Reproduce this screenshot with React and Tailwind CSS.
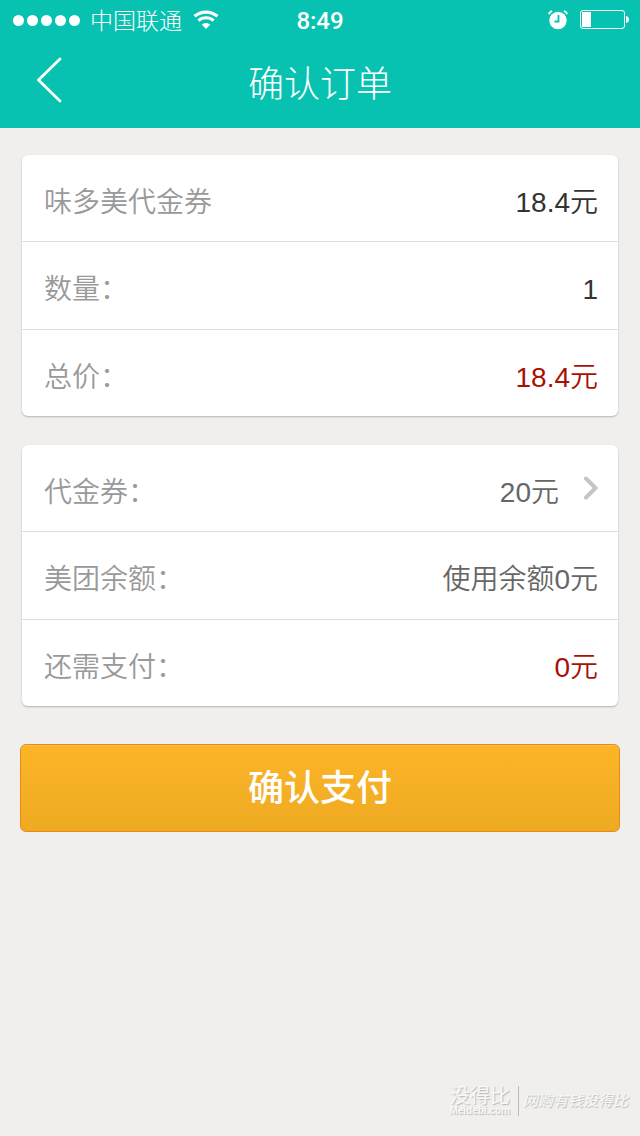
import { clsx } from 'clsx';

const orderRows = [
  { label: '味多美代金券', value: '18.4元', tone: 'dark' },
  { label: '数量：', value: '1', tone: 'dark' },
  { label: '总价：', value: '18.4元', tone: 'red' },
];

const paymentRows = [
  { label: '代金券：', value: '20元', tone: 'gray', link: true },
  { label: '美团余额：', value: '使用余额0元', tone: 'gray' },
  { label: '还需支付：', value: '0元', tone: 'red' },
];

const toneClass = {
  dark: 'text-[#333333]',
  gray: 'text-[#666666]',
  red: 'text-[#a81006]',
};

function WifiIcon() {
  return (
    <svg width="26" height="20" viewBox="0 0 26 20" fill="none" stroke="#fff" aria-label="Wi-Fi">
      <path d="M1.500 6.300C8 .6 18 .6 24.500 6.300" strokeWidth="3.200" />
      <path d="M5.400 10.700C9.800 6.900 16.200 6.900 20.600 10.700" strokeWidth="3" />
      <path d="M13 19 8.800 14.600C11.200 12.500 14.800 12.500 17.200 14.600Z" fill="#fff" stroke="none" />
    </svg>
  );
}

function AlarmIcon() {
  return (
    <svg width="20" height="20" viewBox="0 0 20 20" fill="none" aria-label="闹钟">
      <circle cx="10" cy="10.500" r="8.700" fill="#fff" />
      <path d="M1 4.200C1.400 2.300 2.500 1.400 4.200 1.100M19 4.200C18.600 2.300 17.500 1.400 15.800 1.100" stroke="#fff" strokeWidth="1.800" />
      <path d="M10.500 5v6.500H6.500" stroke="#07c2b0" strokeWidth="1.800" />
    </svg>
  );
}

function BatteryIcon() {
  return (
    <svg width="50" height="20" viewBox="0 0 50 20" fill="none" aria-label="电量">
      <rect x=".5" y=".5" width="44" height="18" rx="2.500" stroke="#fff" />
      <rect x="2" y="2" width="9" height="15" fill="#fff" />
      <path d="M46 6c2 .3 3 1.600 3 3.500s-1 3.200-3 3.500z" fill="#fff" />
    </svg>
  );
}

function StatusBar() {
  return (
    <div className="grid h-10 grid-cols-[1fr_auto_1fr] items-center">
      <div className="flex items-center pl-[13px]">
        <div className="flex gap-[3px]">
          {[0, 1, 2, 3, 4].map((i) => (
            <span key={i} className="size-[11px] rounded-full bg-white" />
          ))}
        </div>
        <span className="ml-[10px] pt-[2px] text-[23px] leading-8 font-light">中国联通</span>
        <span className="ml-[11px]">
          <WifiIcon />
        </span>
      </div>
      <time className="pt-[2px] font-[Roboto,sans-serif] text-2xl font-medium">8:49</time>
      <div className="flex items-center justify-end gap-3 pr-[10px]">
        <AlarmIcon />
        <BatteryIcon />
      </div>
    </div>
  );
}

function Row({ label, value, tone, link }) {
  const content = (
    <>
      <span className="text-[#999999]">{label}</span>
      <span className={clsx('ml-auto', toneClass[tone])}>{value}</span>
      {link && (
        <svg className="ml-6 mb-[10px]" width="15" height="24" viewBox="0 0 15 24" fill="none" aria-hidden="true">
          <path d="M3 2.500l9.500 9.500L3 21.500" stroke="#c5c5c5" strokeWidth="4" strokeLinecap="round" />
        </svg>
      )}
    </>
  );
  const rowClass =
    'flex h-[88px] w-full items-center border-b border-[#e0e0e0] pl-[22px] pr-5 pt-[9px] text-[28px] font-[350] group-first:h-[87px] group-last:h-[86px] group-last:border-b-0';

  return (
    <li className="group">
      {link ? (
        <button type="button" className={rowClass}>{content}</button>
      ) : (
        <div className={rowClass}>{content}</div>
      )}
    </li>
  );
}

function Card({ rows }) {
  return (
    <ul className="mx-[22px] rounded-md bg-white shadow-[0_1px_2px_rgba(0,0,0,0.25)]">
      {rows.map((row) => (
        <Row key={row.label} {...row} />
      ))}
    </ul>
  );
}

function Watermark() {
  return (
    <footer className="mt-auto flex items-center justify-end pb-5 pr-3 text-[#f8f8f8] [text-shadow:1px_1px_1px_#b8b8b8]">
      <div className="border-r border-[#bbbbbb] pr-2 text-right">
        <p className="text-xl leading-5 font-normal">没得比</p>
        <p className="text-[10px] leading-[10px] font-bold">Meidebi.com</p>
      </div>
      <p className="pl-1 text-[15px] leading-6 italic">网购有钱没得比</p>
    </footer>
  );
}

export default function App() {
  return (
    <div className="flex min-h-screen flex-col bg-[#f0efed] font-['Liberation_Sans','Noto_Sans_CJK_SC',sans-serif]">
      <header className="h-32 bg-[#07c2b0] text-white">
        <StatusBar />
        <div className="grid h-20 grid-cols-[1fr_auto_1fr] items-center">
          <button type="button" aria-label="返回" className="ml-9 justify-self-start">
            <svg width="26" height="46" viewBox="0 0 26 46" fill="none">
              <path d="M24 2 2.500 23 24 44" stroke="#fff" strokeWidth="2.800" strokeLinecap="round" strokeLinejoin="round" />
            </svg>
          </button>
          <h1 className="pt-[10px] text-4xl font-light">确认订单</h1>
        </div>
      </header>

      <main className="flex flex-col gap-[29px] pt-[27px]">
        <Card rows={orderRows} />
        <Card rows={paymentRows} />
        <button
          type="button"
          className="mx-5 mt-[9px] h-[88px] rounded-md border border-[#e88a14] bg-linear-to-b from-[#fdb528] to-[#eeaa22] pt-[2px] text-4xl font-medium text-white shadow-[inset_0_1px_0_#ffc04c]"
        >
          确认支付
        </button>
      </main>

      <Watermark />
    </div>
  );
}
